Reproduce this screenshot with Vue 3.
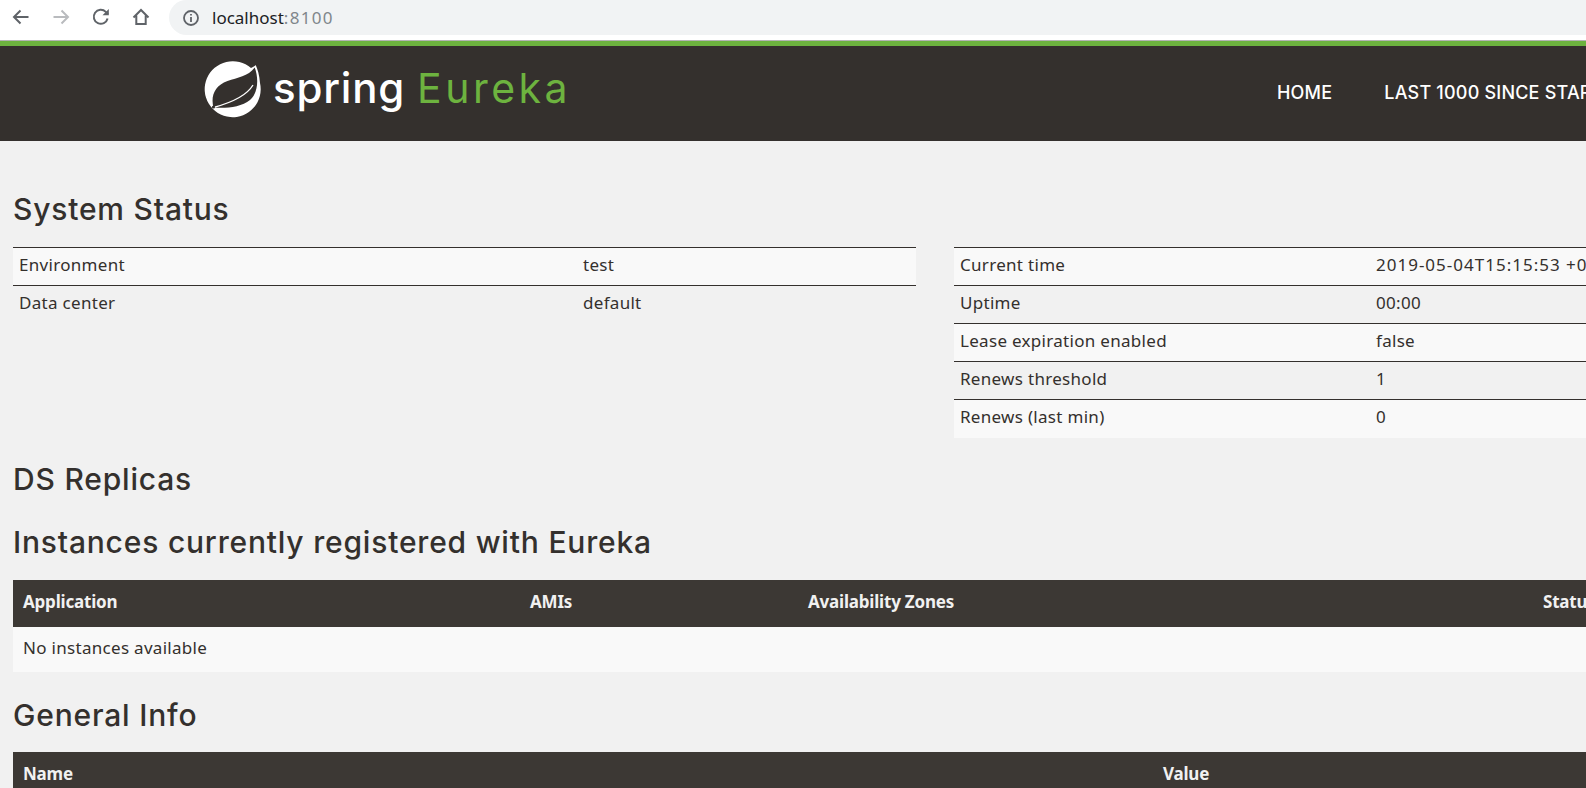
<script setup>
const leftRows = [
  ['Environment', 'test'],
  ['Data center', 'default'],
]
const rightRows = [
  ['Current time', '2019-05-04T15:15:53 +0800'],
  ['Uptime', '00:00'],
  ['Lease expiration enabled', 'false'],
  ['Renews threshold', '1'],
  ['Renews (last min)', '0'],
]
</script>

<template>
  <div class="page">
    <div class="browser">
      <svg class="tool" viewBox="0 0 18 18"><path d="M16.5 9H2.500M8.500 2.500 2 9l6.500 6.500" /></svg>
      <svg class="tool off" viewBox="0 0 18 18"><path d="M1.500 9h14M9.500 2.500 16 9l-6.500 6.500" /></svg>
      <svg class="tool" viewBox="0 0 18 18"><path d="M15.600 10.500A7 7 0 1 1 13.800 3.900L16 6" /><path class="fill" d="M16.800 1v6.300h-6.300z" /></svg>
      <svg class="tool" viewBox="0 0 18 18"><path d="M1.500 9.500 9 2l7.500 7.500M4.300 7.500V16h9.400V7.500" /></svg>
      <div class="omnibox">
        <svg class="info" viewBox="0 0 16 16"><circle cx="8" cy="8" r="7" /><path d="M8 7v5M8 4v1.600" /></svg>
        <span class="url">localhost<span class="port">:8100</span></span>
      </div>
    </div>

    <nav class="nav">
      <div class="brand">
        <svg class="leaf" viewBox="0 0 70 70">
          <path fill="#fff" d="M57.700 10C57 11 55 12 53 13A28 28 0 1 0 62 28C61.500 20 59.500 14 57.700 10z" />
          <path fill="#34302d" d="M15.500 52.500C12.500 41.500 16.500 30.500 29.500 26C39.500 22.500 50 21.500 56.700 12.500C61 24 60 38 52 45C43 52.500 27 53.500 15.500 52.500z" />
          <path fill="none" stroke="#fff" stroke-width="1.300" d="M15.500 52.500C32 48 48 42 55 30" />
          <circle cx="15.500" cy="52" r="1.600" fill="#34302d" />
        </svg>
        <span class="spring">spring</span>
        <span class="eureka">Eureka</span>
      </div>
      <div class="links">
        <a>HOME</a>
        <a>LAST 1000 SINCE STARTUP</a>
      </div>
    </nav>

    <main class="content">
      <h2 class="first">System Status</h2>
      <div class="cols">
        <table class="info-table">
          <tbody>
            <tr v-for="r in leftRows" :key="r[0]">
              <td class="k">{{ r[0] }}</td>
              <td>{{ r[1] }}</td>
            </tr>
          </tbody>
        </table>
        <table class="info-table right">
          <tbody>
            <tr v-for="r in rightRows" :key="r[0]">
              <td class="k2">{{ r[0] }}</td>
              <td>{{ r[1] }}</td>
            </tr>
          </tbody>
        </table>
      </div>

      <h2 class="replicas">DS Replicas</h2>
      <h2 class="instances">Instances currently registered with Eureka</h2>
      <div class="grid-table">
        <div class="head inst">
          <span>Application</span>
          <span>AMIs</span>
          <span>Availability Zones</span>
          <span>Status</span>
        </div>
        <div class="empty">No instances available</div>
      </div>

      <h2 class="general">General Info</h2>
      <div class="grid-table tight">
        <div class="head gen">
          <span>Name</span>
          <span>Value</span>
        </div>
      </div>
    </main>
  </div>
</template>

<style scoped>
.page {
  width: 1870px;
  background: #f1f1f1;
  min-height: 788px;
  color: #34302d;
  font-family: "Noto Sans", "Open Sans", sans-serif;
}
.browser {
  height: 40px;
  box-sizing: border-box;
  background: #fff;
  display: flex;
  align-items: flex-start;
  padding-left: 12px;
  width: 1586px;
}
.tool {
  width: 18px;
  height: 18px;
  margin-top: 8px;
  margin-right: 22px;
  fill: none;
  stroke: #5f6368;
  stroke-width: 2;
  flex: none;
}
.tool.off {
  stroke: #b9bbbe;
}
.tool .fill {
  fill: #5f6368;
  stroke: none;
}
.omnibox {
  margin-left: -3px;
  width: 1420px;
  height: 35px;
  background: #f1f3f4;
  border-radius: 18px 0 0 18px;
  display: flex;
  align-items: center;
  padding-left: 14px;
  box-sizing: border-box;
}
.info {
  width: 16px;
  height: 16px;
  fill: none;
  stroke: #5f6368;
  stroke-width: 1.800;
}
.url {
  margin-left: 13px;
  font-size: 17px;
  color: #202124;
}
.port {
  color: #80868b;
  letter-spacing: 1.300px;
}
.nav {
  height: 95px;
  background: #34302d;
  border-top: 1px solid #b5b5b5;
  box-shadow: inset 0 5px 0 #6db33f;
  padding-top: 5px;
  box-sizing: content-box;
  display: flex;
  justify-content: space-between;
  color: #fff;
}
.brand {
  display: flex;
  align-items: baseline;
  margin-left: 198px;
}
.leaf {
  width: 70px;
  height: 70px;
  flex: none;
  align-self: flex-start;
  margin-top: 9px;
}
.spring {
  font-family: "Inter", sans-serif;
  font-size: 42px;
  font-weight: 500;
  line-height: 54px;
  margin: 15px 0 0 5px;
  letter-spacing: 0.8px;
  color: #fff;
}
.eureka {
  font-family: "Inter", sans-serif;
  font-size: 41px;
  line-height: 54px;
  margin-left: 12px;
  color: #6db33f;
  letter-spacing: 3.500px;
}
.links {
  display: flex;
  gap: 52px;
  width: 593px;
  padding-top: 37px;
  font-family: "Inter", sans-serif;
  font-size: 18px;
  font-weight: 500;
  letter-spacing: 0.2px;
  line-height: 20px;
  white-space: nowrap;
}
.content {
  padding: 0 13px;
}
h2 {
  margin: 0;
  font-family: "Inter", sans-serif;
  font-weight: 500;
  font-size: 30px;
  letter-spacing: 0.8px;
  line-height: 36px;
  color: #34302d;
}
.first {
  padding-top: 50px;
  margin-bottom: 20px;
}
.cols {
  display: flex;
  gap: 38px;
  align-items: flex-start;
}
.info-table {
  flex: 1;
  border-collapse: collapse;
  font-size: 17px;
  letter-spacing: 0.3px;
}
.info-table tr {
  height: 38px;
  border-top: 1px solid #34302d;
}
.info-table tr:nth-child(odd) {
  background: #f9f9f9;
}
.info-table td {
  padding: 0 6px 5px;
}
.right tr:first-child td:last-child {
  letter-spacing: 1px;
}
.k {
  width: 552px;
}
.k2 {
  width: 404px;
}
.replicas {
  margin-top: 23px;
}
.instances {
  margin-top: 27px;
}
.grid-table {
  margin-top: 20px;
}
.grid-table.tight {
  margin-top: 19px;
}
.head {
  height: 47px;
  background: #3c3834;
  color: #f1f1f1;
  font-weight: 700;
  font-size: 17px;
  letter-spacing: -0.2px;
  display: grid;
  align-items: center;
  padding: 0 0 4px 10px;
  box-sizing: border-box;
}
.inst {
  grid-template-columns: 507px 278px 735px 1fr;
}
.gen {
  grid-template-columns: 1140px 1fr;
}
.empty {
  height: 45px;
  background: #f9f9f9;
  padding-left: 10px;
  font-size: 17px;
  letter-spacing: 0.3px;
  line-height: 42px;
}
.general {
  margin-top: 25px;
}
</style>

<style>
html, body {
  overflow: hidden;
  background: #f1f1f1;
}
</style>
